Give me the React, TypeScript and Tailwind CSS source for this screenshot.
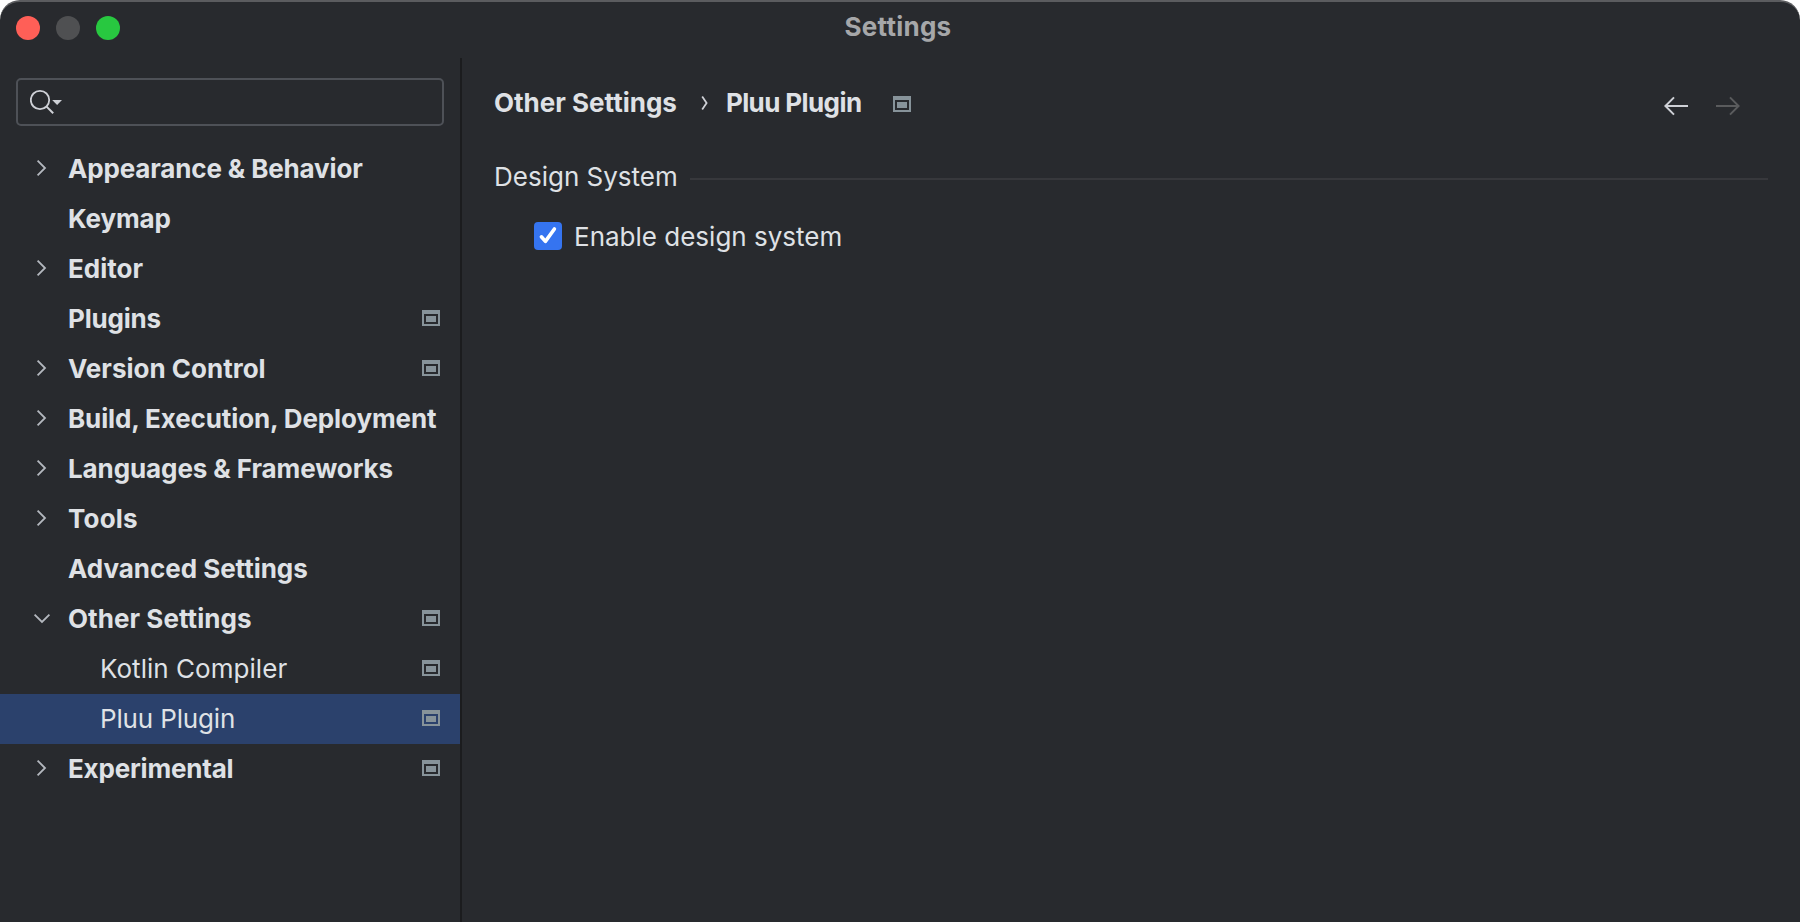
type Item = {
  label: string;
  state?: "closed" | "open";
  project?: boolean;
  child?: boolean;
  selected?: boolean;
  tracking: string;
};

const items: Item[] = [
  { label: "Appearance & Behavior", state: "closed", tracking: "tracking-[-0.15px]" },
  { label: "Keymap", tracking: "tracking-[-0.15px]" },
  { label: "Editor", state: "closed", tracking: "tracking-[0px]" },
  { label: "Plugins", project: true, tracking: "tracking-[-0.2px]" },
  { label: "Version Control", state: "closed", project: true, tracking: "tracking-[0px]" },
  { label: "Build, Execution, Deployment", state: "closed", tracking: "tracking-[-0.12px]" },
  { label: "Languages & Frameworks", state: "closed", tracking: "tracking-[-0.1px]" },
  { label: "Tools", state: "closed", tracking: "tracking-[0.2px]" },
  { label: "Advanced Settings", tracking: "tracking-[-0.03px]" },
  { label: "Other Settings", state: "open", project: true, tracking: "tracking-[0.05px]" },
  { label: "Kotlin Compiler", child: true, project: true, tracking: "tracking-[0.04px]" },
  { label: "Pluu Plugin", child: true, selected: true, project: true, tracking: "tracking-[-0.15px]" },
  { label: "Experimental", state: "closed", project: true, tracking: "tracking-[-0.2px]" },
];

function ProjectIcon({ className = "" }: { className?: string }) {
  return (
    <svg width="18" height="16" viewBox="0 0 18 16" className={`shrink-0 ${className}`} fill="#87939A" shapeRendering="crispEdges">
      <path fillRule="evenodd" d="M0 0H18V16H0ZM2 4V14H16V4Z" />
      <path d="M4 6H14V12H4Z" />
    </svg>
  );
}

function Chevron({ open }: { open: boolean }) {
  return (
    <svg width="18" height="18" viewBox="0 0 18 18" fill="none" stroke="#B4B8BF" strokeWidth="1.8" className="-mt-0.5 block">
      {open ? <path d="M1.6 5.6L9 13L16.4 5.6" /> : <path d="M4.6 1.6L12 9L4.6 16.4" />}
    </svg>
  );
}

function Row({ item }: { item: Item }) {
  return (
    <li className={`flex h-[50px] items-center pr-5 ${item.selected ? "bg-[#2B416C]" : ""} ${item.child ? "pl-[100px]" : "pl-[33px]"}`}>
      {!item.child && <span className="w-[35px] shrink-0">{item.state && <Chevron open={item.state === "open"} />}</span>}
      <span className={`flex-1 whitespace-nowrap text-[26px] leading-[50px] ${item.child ? "font-normal" : "font-bold"} ${item.tracking}`}>
        {item.label}
      </span>
      {item.project && <ProjectIcon className="-mt-0.5" />}
    </li>
  );
}

export default function App() {
  return (
    <div className="h-[922px] w-[1800px] overflow-hidden bg-white font-['Inter',sans-serif] text-[#DFE1E5]">
      <div className="flex h-full flex-col overflow-hidden rounded-t-[20px] border-t-2 border-[#5B5C5F] bg-[#282A2E]">
        <header className="grid h-14 grid-cols-3 items-start">
          <div className="flex gap-4 pl-4 pt-3.5">
            <span className="size-6 rounded-full bg-[#FF5F57]" />
            <span className="size-6 rounded-full bg-[#4F5052]" />
            <span className="size-6 rounded-full bg-[#28C840]" />
          </div>
          <h1 className="pr-1 text-center text-[26px] leading-[50px] font-bold tracking-[0.25px] text-[#A6A7A9]">Settings</h1>
        </header>
        <div className="flex min-h-0 flex-1">
          <aside className="w-[462px] shrink-0 border-r-2 border-[#1B1C1E] pt-5">
            <div className="mr-4 ml-4 flex h-12 items-center rounded-[5px] border-2 border-[#4E5157] pl-3">
              <svg width="34" height="26" viewBox="0 0 34 26" fill="none">
                <circle cx="10" cy="11" r="9.2" stroke="#CED0D6" strokeWidth="1.8" />
                <path d="M16.6 17.6L23.2 24.2" stroke="#CED0D6" strokeWidth="2" />
                <path d="M22.2 11H32L27.1 16Z" fill="#CED0D6" />
              </svg>
            </div>
            <ul className="mt-[18px]">
              {items.map((item) => (
                <Row key={item.label} item={item} />
              ))}
            </ul>
          </aside>
          <main className="flex-1 pr-8 pl-8">
            <div className="flex h-[90px] items-center pr-7">
              <span className="pb-0.5 text-[26px] font-bold">Other Settings</span>
              <svg width="8" height="16" viewBox="0 0 8 16" fill="none" stroke="#CED0D6" strokeWidth="1.8" className="ml-6">
                <path d="M1.2 1.5L5.6 8L1.2 14.5" />
              </svg>
              <span className="ml-[17px] pb-0.5 text-[26px] font-bold tracking-[-0.6px]">Pluu Plugin</span>
              <ProjectIcon className="mt-0.5 ml-8" />
              <div className="mt-[6px] ml-auto flex gap-7">
                <svg width="24" height="20" viewBox="0 0 24 20" fill="none" stroke="#CED0D6" strokeWidth="2">
                  <path d="M24 10H1.6M10 1.4L1.4 10L10 18.6" />
                </svg>
                <svg width="24" height="20" viewBox="0 0 24 20" fill="none" stroke="#5A5B5D" strokeWidth="2">
                  <path d="M0 10H22.4M14 1.4L22.6 10L14 18.6" />
                </svg>
              </div>
            </div>
            <div className="flex h-[58px] items-center">
              <span className="pb-0.5 text-[26px]">Design System</span>
              <span className="mt-1 ml-3 h-0.5 flex-1 bg-[#37383C]" />
            </div>
            <label className="ml-10 flex h-15 items-center gap-3">
              <span className="grid size-7 place-items-center rounded-[4px] bg-[#3574F0]">
                <svg width="28" height="28" viewBox="0 0 28 28" fill="none" stroke="#fff" strokeWidth="3.6" strokeLinecap="round" strokeLinejoin="round">
                  <path d="M7.4 14.8L11.4 19.4L20.4 7" />
                </svg>
              </span>
              <span className="text-[26px]">Enable design system</span>
            </label>
          </main>
        </div>
      </div>
    </div>
  );
}
